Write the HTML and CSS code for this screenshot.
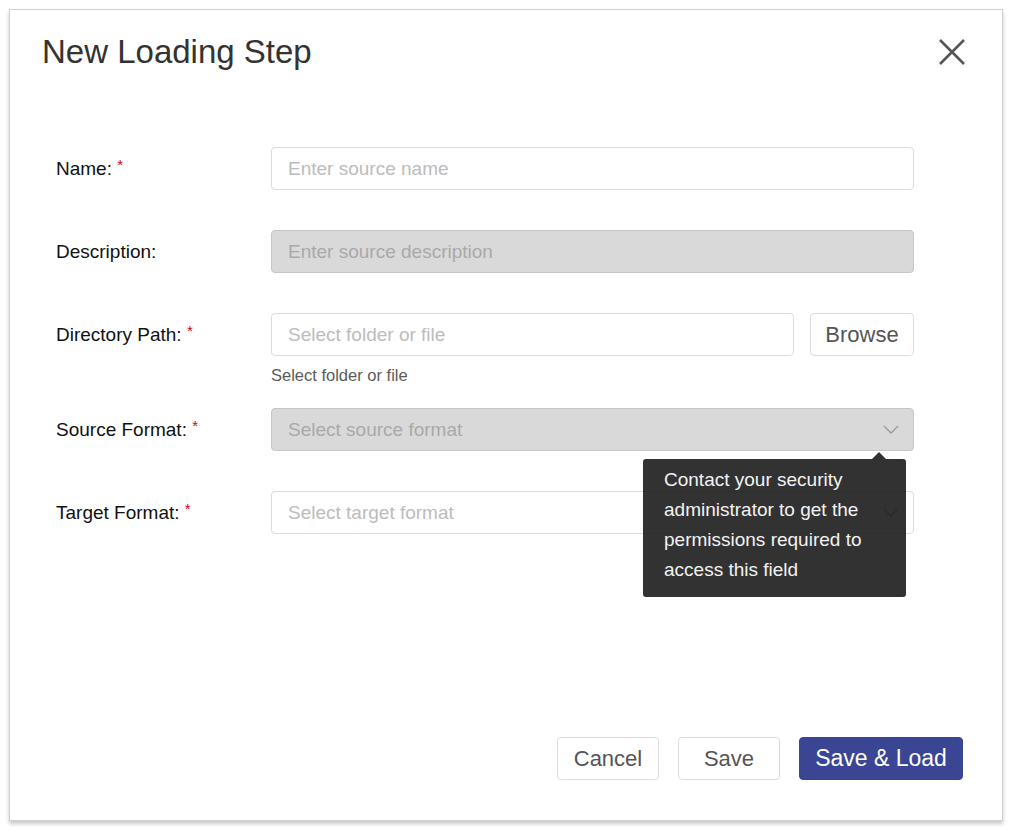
FILE: index.html
```html
<!DOCTYPE html>
<html lang="en">
<head>
<meta charset="utf-8">
<title>New Loading Step</title>
<link rel="stylesheet" href="styles.css">
</head>
<body>
<div class="dialog">
  <div class="dialog-header">
    <h1 class="dialog-title">New Loading Step</h1>
    <button class="close-btn" aria-label="Close">
      <svg width="26" height="26" viewBox="0 0 26 26"><path d="M1 1 L25 25 M25 1 L1 25" stroke="#555" stroke-width="2.6" fill="none"/></svg>
    </button>
  </div>
  <div class="form">
    <div class="row">
      <label class="label">Name: <span class="req">*</span></label>
      <div class="field">
        <input class="input" type="text" placeholder="Enter source name">
      </div>
    </div>
    <div class="row">
      <label class="label">Description:</label>
      <div class="field">
        <input class="input input-disabled" type="text" placeholder="Enter source description" disabled>
      </div>
    </div>
    <div class="row row-help">
      <label class="label">Directory Path: <span class="req">*</span></label>
      <div class="field">
        <div class="path-line">
          <input class="input" type="text" placeholder="Select folder or file">
          <button class="btn btn-browse">Browse</button>
        </div>
        <div class="help">Select folder or file</div>
      </div>
    </div>
    <div class="row">
      <label class="label">Source Format: <span class="req">*</span></label>
      <div class="field field-tip">
        <div class="select select-disabled">
          <span class="select-text">Select source format</span>
          <svg class="chevron" width="16" height="9" viewBox="0 0 16 9"><path d="M1 1 L8 8 L15 1" stroke="#999" stroke-width="1.3" fill="none"/></svg>
        </div>
        <div class="tooltip">Contact your security administrator to get the permissions required to access this field</div>
      </div>
    </div>
    <div class="row">
      <label class="label">Target Format: <span class="req">*</span></label>
      <div class="field">
        <div class="select">
          <span class="select-text">Select target format</span>
          <svg class="chevron" width="16" height="9" viewBox="0 0 16 9"><path d="M1 1 L8 8 L15 1" stroke="#999" stroke-width="1.3" fill="none"/></svg>
        </div>
      </div>
    </div>
  </div>
  <div class="dialog-footer">
    <button class="btn btn-footer">Cancel</button>
    <button class="btn btn-footer">Save</button>
    <button class="btn btn-primary">Save &amp; Load</button>
  </div>
</div>
</body>
</html>
```
FILE: styles.css
```css
* { box-sizing: border-box; }
html, body { margin: 0; padding: 0; background: #fff; }
body {
  font-family: "Liberation Sans", Arial, sans-serif;
  padding: 9px;
  width: 1012px;
  height: 834px;
}
.dialog {
  width: 994px;
  height: 812px;
  border: 1px solid #cfcfcf;
  background: #fff;
  box-shadow: 0 3px 4px rgba(0,0,0,0.22);
  display: flex;
  flex-direction: column;
}
.dialog-header {
  display: flex;
  align-items: center;
  justify-content: space-between;
  padding: 22px 37px 0 32px;
}
.dialog-title {
  margin: 0;
  font-size: 33px;
  line-height: 40px;
  font-weight: 400;
  color: #333;
}
.close-btn {
  border: 0;
  background: none;
  padding: 0;
  width: 26px;
  height: 26px;
  display: flex;
  cursor: pointer;
}
.form {
  padding: 75px 88px 0 46px;
  display: flex;
  flex-direction: column;
  gap: 40px;
}
.row {
  display: flex;
  align-items: flex-start;
}
.row-help { margin-bottom: -17px; }
.label {
  width: 215px;
  flex: none;
  height: 43px;
  display: flex;
  align-items: center;
  font-size: 19px;
  color: #111;
  white-space: pre;
}
.req {
  color: #d0021b;
  font-size: 15px;
  position: relative;
  top: -4px;
}
.field {
  flex: 1;
  min-width: 0;
}
.field-tip { position: relative; }
.input {
  width: 100%;
  height: 43px;
  border: 1px solid #dcdcdc;
  border-radius: 4px;
  padding: 0 16px;
  font-family: inherit;
  font-size: 19px;
  color: #333;
  background: #fff;
  outline: none;
}
.input::placeholder { color: #bcbcbc; }
.input-disabled {
  background: #d9d9d9;
  border-color: #c6c6c6;
}
.input-disabled::placeholder { color: #a9a9a9; }
.path-line {
  display: flex;
  gap: 16px;
}
.path-line .input { flex: 1; }
.help {
  margin-top: 9px;
  font-size: 16.5px;
  line-height: 20px;
  color: #5a5a5a;
}
.select {
  height: 43px;
  border: 1px solid #dcdcdc;
  border-radius: 4px;
  padding: 0 14px 0 16px;
  display: flex;
  align-items: center;
  justify-content: space-between;
  font-size: 19px;
  color: #bcbcbc;
  background: #fff;
}
.select-disabled {
  background: #d9d9d9;
  border-color: #c6c6c6;
  color: #a9a9a9;
}
.tooltip {
  position: absolute;
  top: calc(100% + 8px);
  right: 8px;
  width: 263px;
  padding: 6px 18px 12px 21px;
  background: rgba(28, 28, 28, 0.9);
  color: #f2f2f2;
  font-size: 19px;
  line-height: 30px;
  border-radius: 3px;
  z-index: 2;
}
.tooltip::before {
  content: "";
  position: absolute;
  top: -7px;
  left: 229px;
  border-left: 7px solid transparent;
  border-right: 7px solid transparent;
  border-bottom: 7px solid rgba(28, 28, 28, 0.9);
}
.btn {
  font-family: inherit;
  height: 43px;
  border: 1px solid #dcdcdc;
  border-radius: 4px;
  background: #fff;
  color: #555;
  font-size: 22px;
  padding: 0;
  cursor: pointer;
}
.btn-browse { width: 104px; flex: none; }
.dialog-footer {
  margin-top: auto;
  display: flex;
  justify-content: flex-end;
  gap: 19px;
  padding: 0 39px 40px 0;
}
.btn-footer { width: 102px; }
.btn-primary {
  width: 164px;
  background: #3a4694;
  border-color: #3a4694;
  color: #fff;
  font-size: 23px;
}
```
